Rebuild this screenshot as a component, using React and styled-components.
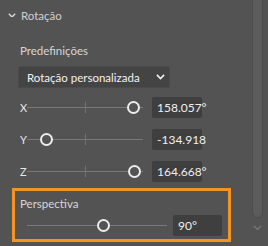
import styled, { createGlobalStyle } from "styled-components"

const Global = createGlobalStyle`
  html, body { margin: 0; padding: 0; background: #535353; }
  body { font-family: Lato, "Open Sans", sans-serif; }
`

const Panel = styled.div`
  width: 268px;
  height: 246px;
  background: #535353;
  display: flex;
  overflow: hidden;
`

const Content = styled.div`
  width: 250px;
  display: flex;
  flex-direction: column;
`

const Header = styled.div`
  height: 30px;
  display: flex;
  align-items: center;
  gap: 5px;
  padding-left: 8px;
  color: #cfcfcf;
  font-size: 11.5px;
`

const Label = styled.div`
  padding-left: 20px;
  color: #d6d6d6;
  font-size: 11.5px;
  height: 22px;
  line-height: 22px;
  margin-top: 10px;
`

const Dropdown = styled.div`
  margin: 4px 0 0 18px;
  width: 152px;
  height: 22px;
  box-sizing: border-box;
  background: #444444;
  border: 1px solid #4b4b4b;
  border-radius: 2px;
  display: flex;
  align-items: center;
  justify-content: space-between;
  padding: 0 4px 0 8px;
  color: #f2f2f2;
  font-size: 11.5px;
`

const Rows = styled.div`
  margin-top: 3px;
  display: flex;
  flex-direction: column;
`

const Row = styled.div`
  height: 32px;
  display: flex;
  align-items: center;
  padding-left: ${(p) => p.$pad || 20}px;
`

const Axis = styled.span`
  width: 7px;
  color: #e6e6e6;
  font-size: 11px;
`

const Track = styled.div`
  position: relative;
  width: ${(p) => p.$w}px;
  height: 1px;
  background: #787878;
  margin-left: ${(p) => p.$ml || 0}px;
`

const Tick = styled.div`
  position: absolute;
  left: 50%;
  top: -5px;
  width: 1px;
  height: 11px;
  background: #737373;
`

const Handle = styled.div`
  position: absolute;
  top: -6px;
  width: 13px;
  height: 13px;
  margin-left: -6px;
  box-sizing: border-box;
  border-radius: 50%;
  border: 2.5px solid #ececec;
  background: #535353;
`

const Value = styled.div`
  margin-left: ${(p) => p.$ml}px;
  width: ${(p) => p.$w}px;
  height: 21px;
  box-sizing: border-box;
  background: #3f3f3f;
  border-radius: 2px;
  color: #f0f0f0;
  font-size: 12px;
  line-height: 21px;
  padding-left: 5px;
`

const Highlight = styled.div`
  margin: 1px 0 0 12px;
  width: 219px;
  height: 54px;
  box-sizing: border-box;
  border: 3px solid #f29423;
  display: flex;
  flex-direction: column;
`

const SubLabel = styled.div`
  padding: 5px 0 0 5px;
  color: #d6d6d6;
  font-size: 11.5px;
  height: 16px;
  line-height: 16px;
`

const Scroll = styled.div`
  width: 12px;
  margin-left: 1px;
  display: flex;
  flex-direction: column;
  align-items: center;
`

const Thumb = styled.div`
  width: 11px;
  height: 228px;
  margin-top: -10px;
  box-sizing: border-box;
  background: #5c5c5c;
  border: 1px solid #4c4c4c;
  border-radius: 0 0 6px 6px;
`

const Arrow = styled.div`
  margin-top: 7px;
  display: flex;
`

const Chevron = ({ size = 8, color = "#e0e0e0", w = 1.6 }) => (
  <svg width={size} height={size * 0.6} viewBox="0 0 10 6">
    <path d="M1 1 L5 5 L9 1" fill="none" stroke={color} strokeWidth={w} />
  </svg>
)

const Slider = ({ axis, pos, value }) => (
  <Row>
    <Axis>{axis}</Axis>
    <Track $w={116}>
      <Tick />
      <Handle style={{ left: `${pos}%` }} />
    </Track>
    <Value $ml={9} $w={50}>{value}</Value>
  </Row>
)

export default function App() {
  return (
    <>
      <Global />
      <Panel>
        <Content>
          <Header>
            <Chevron size={8} color="#d8d8d8" w={1.8} />
            <span>Rotação</span>
          </Header>
          <Label>Predefinições</Label>
          <Dropdown>
            <span>Rotação personalizada</span>
            <Chevron size={9} color="#f0f0f0" w={1.8} />
          </Dropdown>
          <Rows>
            <Slider axis="X" pos={91} value="158.057°" />
            <Slider axis="Y" pos={16} value="-134.918" />
            <Slider axis="Z" pos={92} value="164.668°" />
          </Rows>
          <Highlight>
            <SubLabel>Perspectiva</SubLabel>
            <Row $pad={12}>
              <Track $w={140}>
                <Handle style={{ left: "54%" }} />
              </Track>
              <Value $ml={6} $w={49}>90°</Value>
            </Row>
          </Highlight>
        </Content>
        <Scroll>
          <Thumb />
          <Arrow>
            <Chevron size={9} color="#7a7a7a" w={1.4} />
          </Arrow>
        </Scroll>
      </Panel>
    </>
  )
}
